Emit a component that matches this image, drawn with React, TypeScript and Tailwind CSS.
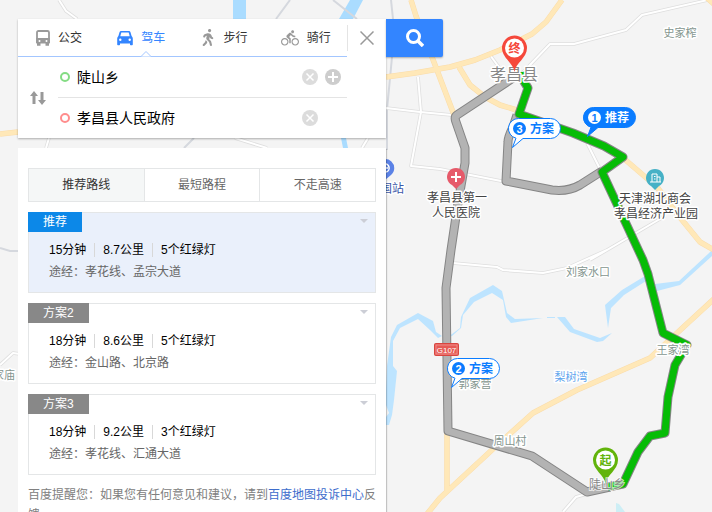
import { useState } from 'react';
import type { ReactNode } from 'react';
import clsx from 'clsx';
import { FaWalking } from 'react-icons/fa';
import { MdDirectionsBike } from 'react-icons/md';

const GREY_ROUTE = 'M513 78 L457 115 Q454 117 456 122 L465 148 L465 163 L458 203 L451 250 L446 288 L448 431 L532 456 L587 492 L610 487';
const GREY_BRANCH = 'M517 115 L513 127 Q508 137 508 142 L506 181 L552 190 Q568 192 580 185 L602 171';
const GREEN_ROUTE =
  'M522 72 L523 80 L528 88 L519 114 L573 133 L604 146 L623 157 L602 172 L643 260 L648 274 L663 333 L687 345 L675 365 L668 397 L665 433 L650 436 L638 452 L623 484 L608 487';

const labels = [
  { text: '史家榨', x: 680, y: 37 },
  { text: '刘家水口', x: 588, y: 276 },
  { text: '王家湾', x: 673, y: 354 },
  { text: '郭家营', x: 475, y: 388 },
  { text: '周山村', x: 510, y: 445 },
  { text: '家庙', x: 4, y: 379 },
];

function BusIcon() {
  return (
    <svg viewBox="0 0 14 16" className="h-4 w-3.5" fill="none">
      <path d="M1 13V2.5Q1 1 2.5 1h9Q13 1 13 2.5V13" stroke="currentColor" strokeWidth="1.8" />
      <path d="M0.3 8h13.4v5.5h-13.4z" fill="currentColor" />
      <path d="M1 13h3.500v2.700H1zM9.500 13h3.500v2.700H9.500z" fill="currentColor" />
      <circle cx="3.500" cy="11" r="1" fill="#fff" />
      <circle cx="10.500" cy="11" r="1" fill="#fff" />
    </svg>
  );
}

function CarIcon() {
  return (
    <svg viewBox="0 0 16 16" className="size-4" fill="currentColor">
      <path d="M4 1H12Q13 1 13.400 2L14.600 6Q15.800 7 15.800 8.500V14.500Q15.800 15.200 15 15.200H13.700Q13 15.200 13 14.500V13.500H3V14.500Q3 15.200 2.300 15.200H1Q.2 15.200 .2 14.500V8.500Q.2 7 1.400 6L2.600 2Q3 1 4 1Z" />
      <path d="M4.300 2.500H11.700L12.700 6.300H3.300Z" fill="#fff" />
      <circle cx="3.300" cy="9.800" r="1.200" fill="#fff" />
      <circle cx="12.700" cy="9.800" r="1.200" fill="#fff" />
    </svg>
  );
}

const modes = [
  { name: '公交', icon: <BusIcon /> },
  { name: '驾车', icon: <CarIcon /> },
  { name: '步行', icon: <FaWalking className="h-[17px] w-4" /> },
  { name: '骑行', icon: <MdDirectionsBike className="size-[18px]" /> },
];

const filters = ['推荐路线', '最短路程', '不走高速'];

const plans = [
  { title: '推荐', time: '15分钟', distance: '8.7公里', lights: '5个红绿灯', via: '孝花线、孟宗大道' },
  { title: '方案2', time: '18分钟', distance: '8.6公里', lights: '5个红绿灯', via: '金山路、北京路' },
  { title: '方案3', time: '18分钟', distance: '9.2公里', lights: '3个红绿灯', via: '孝花线、汇通大道' },
];

function Pin({ x, y, color, text }: { x: number; y: number; color: string; text: string }) {
  return (
    <g transform={`translate(${x} ${y})`}>
      <path d="M0 0C-1 -9 -12.500 -14 -12.500 -24A12.500 12.500 0 0 1 12.500 -24C12.500 -14 1 -9 0 0Z" fill={color} />
      <circle cy="-24" r="9.500" fill="#fff" />
      <text y="-19.500" textAnchor="middle" fontSize="12" fontWeight="700" fill={color}>{text}</text>
    </g>
  );
}

function Bubble({ x, y, num, text, active }: { x: number; y: number; num: number; text: string; active?: boolean }) {
  const fg = active ? '#fff' : '#0a7cff';
  return (
    <g transform={`translate(${x} ${y})`}>
      <path
        d="M10.500 .5H42.500A10 10 0 0 1 42.500 20.500H15L4.500 29.500L8 20.200A10 10 0 0 1 10.500 .5Z"
        fill={active ? '#0a7cff' : '#fff'}
        stroke="#0a7cff"
      />
      <circle cx="11.500" cy="10.500" r="6.500" fill={fg} />
      <text x="11.500" y="14.500" textAnchor="middle" fontSize="11" fontWeight="700" fill={active ? '#0a7cff' : '#fff'}>{num}</text>
      <text x="34" y="15" textAnchor="middle" fontSize="12" fontWeight="700" fill={fg}>{text}</text>
    </g>
  );
}

function RouteLine({ d, color }: { d: string; color: string }) {
  return (
    <g fill="none" strokeLinejoin="round">
      <path d={d} stroke="#858585" strokeWidth="9" />
      <path d={d} stroke={color} strokeWidth="7" />
    </g>
  );
}

function RouteMap() {
  return (
    <svg
      viewBox="0 0 712 512"
      preserveAspectRatio="xMinYMin slice"
      className="absolute inset-0 h-full w-full"
      role="img"
      aria-label="孝昌县地图"
    >
      {/* water */}
      <g fill="#bde4ff">
        <path d="M233 0H246V19H233ZM350 0H363L353 19H339ZM341 138H346L348 148H343Z" fill="#aadcff" />
        <path d="M386 390L387 366L391 337L397 325L418 313L433 321L436 332L442 336L438 338L430 330L418 319L400 328L393 341L393 366L397 371L394 400L392 415L389 425H386V417L389 413L386 405Z" />
        <path d="M448 337L460 328L461 317L470 298L493 285L502 291L507 313L515 319L543 318L511 323L506 317L503 300L492 293L474 302L463 315L461 328L452 336Z" />
        <path d="M547 317L555 317V318H547ZM557 317L565 317L574 329L600 338L612 333L603 341L597 342L570 332Z" />
        <path d="M608 328L605 305L622 290L645 276L646 281L624 295L611 308Z" />
        <path d="M655 284L679 281L708 254L712 250V256L680 285L657 291Z" />
        <path d="M616 503L619 504L625 512H616Z" fill="#cdeef5" />
      </g>

      {/* rail and minor roads */}
      <g fill="none" stroke="#d5d8de" strokeWidth="2">
        <path d="M276 19L290 0M333 0L357 19M391 0L393 19L392 57L387 110V150" />
        <path d="M184 148L194 138M0 248L10 251H18" />
      </g>
      {[{ c: '#dedede', w: 3.5 }, { c: '#fff', w: 2 }].map((s) => (
        <g key={s.c} fill="none" stroke={s.c} strokeWidth={s.w} strokeLinejoin="round">
          <path d="M59 0L66 11L77 19M49 138L46 148M235 138L267 148M362 148L368 138" />
          <path d="M386 108L420 112L452 115M418 77L421 112L411 166L440 169L506 182" />
          <path d="M490 55L501 70M521 74L529 66L550 44H574L626 30L642 15L712 -1" />
          <path d="M587 143L601 171M590 260L665 216M453 263L497 267L503 270L543 273L567 268L607 250" />
          <path d="M563 512L576 497L590 493M0 365L13 353L20 354" />
        </g>
      ))}

      {/* main roads */}
      {[{ c: '#fadcaa', w: 5.5 }, { c: '#ffe8b8', w: 4.5 }].map((s) => (
        <g key={s.c} fill="none" stroke={s.c} strokeWidth={s.w} strokeLinejoin="round">
          <path d="M411 0L416 16L432 57L456 120M0 134L18 132" />
          <path d="M386 77L415 73L450 67L475 60L500 50L532 34L546 22L562 0" />
          <path d="M459 67L470 85L485 97L500 105L520 111" />
          <path d="M622 157L657 187L678 215L700 242L714 250M707 -2L714 4" />
          <path d="M714 299L677 333L650 358L577 390L533 413L493 449L440 498L427 514M447 430V490" />
        </g>
      ))}

      <RouteLine d={GREY_ROUTE} color="#b3b3b3" />
      <RouteLine d={GREY_BRANCH} color="#b3b3b3" />
      <RouteLine d={GREEN_ROUTE} color="#06bc06" />

      {/* place names */}
      <g textAnchor="middle" stroke="#fff" strokeWidth="3" strokeLinejoin="round" paintOrder="stroke">
        <g fontSize="11" fill="#85968f">
          {labels.map((l) => (
            <text key={l.text} x={l.x} y={l.y}>{l.text}</text>
          ))}
          <text x="571" y="381" fill="#5fa5ee">梨树湾</text>
        </g>
        <text x="514" y="80" fontSize="16" fill="#888">孝昌县</text>
        <g fontSize="12" fill="#444">
          <text x="457" y="202">孝昌县第一</text>
          <text x="456" y="217">人民医院</text>
          <text x="655" y="203">天津湖北商会</text>
          <text x="656" y="218">孝昌经济产业园</text>
          <text x="392" y="193" fill="#3c58a8">国站</text>
        </g>
      </g>

      {/* points of interest */}
      <path d="M456 189L452 185A9 9 0 1 1 460 185Z" fill="#e65a6a" />
      <path d="M456 172V182M451 177H461" stroke="#fff" strokeWidth="2" />
      <path d="M655 190L651 186A9 9 0 1 1 659 186Z" fill="#46b1c6" />
      <path d="M652 182V174H657V182M657 177H660V182M650 182H661M654 176.500H655.500M654 179H655.500" fill="none" stroke="#fff" />
      <path d="M385 180L381 176A9 9 0 1 1 391 175Z" fill="#5b82e6" />
      <path d="M384 164A4 4 0 1 1 386 172M384 168H388" fill="none" stroke="#fff" strokeWidth="1.500" />
      <rect x="434.500" y="343.500" width="24" height="12" rx="1" fill="#e65a55" stroke="#d8453f" />
      <rect x="436" y="345" width="21" height="9" fill="none" stroke="#f3aaa7" strokeWidth=".6" />
      <text x="446.500" y="352.500" textAnchor="middle" fontSize="8" fill="#fff">G107</text>

      <Bubble x={583} y={107} num={1} text="推荐" active />
      <Bubble x={508} y={118} num={3} text="方案" />
      <Bubble x={447} y={358} num={2} text="方案" />
      <Pin x={514.5} y={72} color="#f5483b" text="终" />
      <Pin x={605.5} y={484} color="#62b40b" text="起" />
      <text x="607" y="489" textAnchor="middle" fontSize="12" fill="#888" stroke="#fff" strokeWidth="2" strokeOpacity=".7" paintOrder="stroke">陡山乡</text>
    </svg>
  );
}

function RoundButton({ label, children }: { label: string; children: ReactNode }) {
  return (
    <button type="button" aria-label={label} className="size-4 shrink-0 rounded-full">
      <svg viewBox="0 0 16 16" className="size-4" stroke="#fff" strokeWidth="1.500">
        {children}
      </svg>
    </button>
  );
}

export default function App() {
  const [mode, setMode] = useState('驾车');
  const [filter, setFilter] = useState('推荐路线');
  const [selected, setSelected] = useState(0);
  const [start, setStart] = useState('陡山乡');
  const [end, setEnd] = useState('孝昌县人民政府');

  const swap = () => {
    setStart(end);
    setEnd(start);
  };

  return (
    <main className="relative h-screen overflow-hidden bg-[#f4f4f4] font-['Liberation_Sans','Noto_Sans_CJK_SC',sans-serif] text-xs text-black">
      <RouteMap />

      <div className="relative flex h-full items-start pt-[19px] pl-[18px]">
        <div className="flex h-full w-[368px] flex-col gap-2.5">
          {/* Search card */}
          <form id="route-form" onSubmit={(e) => e.preventDefault()} className="bg-white shadow-[0_1px_2px_rgba(0,0,0,0.3)]">
            <div className="flex h-[38px]">
              <div className="flex flex-1 border-b border-[#a3c6ff]">
                {modes.map((m) => (
                  <button
                    key={m.name}
                    type="button"
                    onClick={() => setMode(m.name)}
                    className={clsx('relative flex flex-1 items-center justify-center gap-2', mode === m.name ? 'text-[#3385ff]' : 'text-[#999]')}
                  >
                    {m.icon}
                    <span className={mode === m.name ? 'text-[#3385ff]' : 'text-[#333]'}>{m.name}</span>
                    {mode === m.name && (
                      <svg viewBox="0 0 10 6" className="absolute -bottom-px left-1/2 h-1.5 w-2.5" fill="#fff" stroke="#a3c6ff">
                        <path d="M0 5.500L5 .5L10 5.500" />
                      </svg>
                    )}
                  </button>
                ))}
              </div>
              <button type="button" aria-label="关闭" className="my-1.5 flex w-[39px] items-center justify-center border-l border-[#e4e4e4]">
                <svg viewBox="0 0 14 14" className="size-3.5" stroke="#999" strokeWidth="1.500">
                  <path d="M.5 .5L13.500 13.500M13.500 .5L.5 13.500" />
                </svg>
              </button>
            </div>

            <div className="flex pr-[39px]">
              <button type="button" onClick={swap} aria-label="交换起终点" className="flex w-10 items-center justify-center">
                <svg viewBox="0 0 16 14" className="h-3.5 w-4" fill="#999">
                  <path d="M4 0L8 5H5.500V13H2.500V5H0ZM12 14L8 9H10.500V1H13.500V9H16Z" />
                </svg>
              </button>
              <div className="flex-1">
                <div className="flex h-[41px] items-center gap-[7px] border-b border-[#e4e4e4] pr-1.5 pl-0.5">
                  <span className="size-2.5 rounded-full border-2 border-[#84dc84]" />
                  <input
                    aria-label="起点"
                    value={start}
                    onChange={(e) => setStart(e.target.value)}
                    className="min-w-0 flex-1 text-sm outline-none"
                  />
                  <RoundButton label="清空起点">
                    <circle cx="8" cy="8" r="8" fill="#dcdcdc" stroke="none" />
                    <path d="M4.500 4.500L11.500 11.500M11.500 4.500L4.500 11.500" />
                  </RoundButton>
                  <RoundButton label="添加途经点">
                    <circle cx="8" cy="8" r="8" fill="#cdcdcd" stroke="none" />
                    <path d="M3 8H13M8 3V13" strokeWidth="2" />
                  </RoundButton>
                </div>
                <div className="flex h-10 items-center gap-[7px] pr-[29px] pl-0.5">
                  <span className="size-2.5 rounded-full border-2 border-[#ff8d8d]" />
                  <input
                    aria-label="终点"
                    value={end}
                    onChange={(e) => setEnd(e.target.value)}
                    className="min-w-0 flex-1 text-sm outline-none"
                  />
                  <RoundButton label="清空终点">
                    <circle cx="8" cy="8" r="8" fill="#dcdcdc" stroke="none" />
                    <path d="M4.500 4.500L11.500 11.500M11.500 4.500L4.500 11.500" />
                  </RoundButton>
                </div>
              </div>
            </div>
          </form>

          {/* Results */}
          <section className="flex-1 bg-white px-2.5 pt-5 shadow-[1px_1px_1px_rgba(0,0,0,0.2)]">
            <div className="flex h-[34px] divide-x divide-[#e4e6e7] border border-[#e4e6e7]">
              {filters.map((f) => (
                <button
                  key={f}
                  type="button"
                  onClick={() => setFilter(f)}
                  className={clsx('flex-1', f === filter ? 'bg-[#f5f7f7] text-[#333]' : 'text-[#666]')}
                >
                  {f}
                </button>
              ))}
            </div>

            <ul className="mt-2.5 space-y-2.5">
              {plans.map((p, i) => (
                <li
                  key={p.title}
                  onClick={() => setSelected(i)}
                  className={clsx('relative h-[81px] border border-[#e4e6e7]', i === selected ? 'bg-[#eaf0fb]' : 'bg-white')}
                >
                  <h3 className={clsx('-mt-px -ml-px h-5 w-fit px-[15px] leading-5 text-white', i === selected ? 'bg-[#0c88e8]' : 'bg-[#888]')}>
                    {p.title}
                  </h3>
                  <button type="button" aria-label="展开" className="absolute top-1.5 right-[7px]">
                    <svg viewBox="0 0 8 4" className="h-1 w-2" fill="#ccced6">
                      <path d="M0 0H8L4 4Z" />
                    </svg>
                  </button>
                  <div className="mt-[7px] px-5 leading-[22px]">
                    <p className="flex items-center gap-2">
                      <span>{p.time}</span>
                      <span className="h-3.5 w-px bg-[#d8d8d8]" />
                      <span>{p.distance}</span>
                      <span className="h-3.5 w-px bg-[#d8d8d8]" />
                      <span>{p.lights}</span>
                    </p>
                    <p className="text-[#666]">途经：{p.via}</p>
                  </div>
                </li>
              ))}
            </ul>

            <p className="mt-2.5 -mr-1 leading-5 break-all text-[#808080]">
              百度提醒您：如果您有任何意见和建议，请到<a href="#feedback" className="text-[#3d6dcc]">百度地图投诉中心</a>反馈
            </p>
          </section>
        </div>

        <button
          type="submit"
          form="route-form"
          aria-label="搜索"
          className="flex h-[38px] w-[57px] items-center justify-center rounded-r-xs bg-[#3385ff] shadow-[0_1px_2px_rgba(0,0,0,0.3)]"
        >
          <svg viewBox="0 0 18 18" className="size-[18px]" fill="none" stroke="#fff" strokeWidth="3">
            <circle cx="7.500" cy="7.500" r="6" />
            <path d="M12 12L17 17" strokeWidth="3.500" />
          </svg>
        </button>
      </div>
    </main>
  );
}
